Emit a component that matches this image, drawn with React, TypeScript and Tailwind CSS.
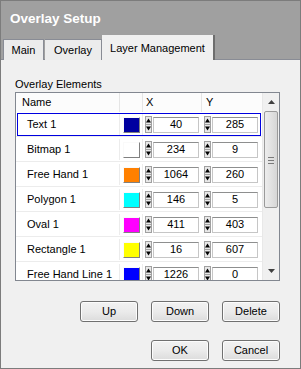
import React from "react";

const rows = [
  { name: "Text 1", color: "#0000a0", x: "40", y: "285", sel: true },
  { name: "Bitmap 1", color: "#ffffff", x: "234", y: "9" },
  { name: "Free Hand 1", color: "#ff8000", x: "1064", y: "260" },
  { name: "Polygon 1", color: "#00ffff", x: "146", y: "5" },
  { name: "Oval 1", color: "#ff00ff", x: "411", y: "403" },
  { name: "Rectangle 1", color: "#ffff00", x: "16", y: "607" },
  { name: "Free Hand Line 1", color: "#0000ff", x: "1226", y: "0" },
];

function Spinner() {
  return (
    <svg width="7" height="17" viewBox="0 0 7 17" className="shrink-0">
      <rect x="0.5" y="0.5" width="6" height="16" fill="#e8e8e8" stroke="#a0a0a0" />
      <line x1="0" y1="8.5" x2="7" y2="8.5" stroke="#a0a0a0" />
      <polygon points="3.5,2.5 6,6.5 1,6.5" fill="#000" />
      <polygon points="1,10.5 6,10.5 3.5,14.5" fill="#000" />
    </svg>
  );
}

function NumBox({ v }: { v: string }) {
  return (
    <div className="flex items-center gap-[1px]">
      <Spinner />
      <div className="w-[46px] h-[16px] bg-white border border-[#c6c6c6] border-t-[#8e8f8f] flex items-center justify-center text-[11px] leading-none text-[#000]">
        {v}
      </div>
    </div>
  );
}

function Btn({ label }: { label: string }) {
  return (
    <div className="w-[58px] h-[21px] rounded-[3px] border border-[#707070] bg-gradient-to-b from-[#f2f2f2] via-[#ebebeb] to-[#dcdcdc] flex items-center justify-center text-[11px] text-black shadow-[inset_0_0_0_1px_#fcfcfc]">
      {label}
    </div>
  );
}

export default function App() {
  return (
    <div
      className="w-[301px] h-[369px] bg-[#a0a0a0] border border-[#7c7c7c] flex flex-col overflow-hidden"
      style={{ fontFamily: '"Liberation Sans", Arial, sans-serif' }}
    >
      <div className="h-[35px] flex items-center pl-[9px] pt-[1px]">
        <span className="text-white font-bold text-[13.5px]">Overlay Setup</span>
      </div>
      <div className="flex items-end pl-[2px] h-[24px] relative z-10 -mb-px">
        <div className="w-[41px] h-[21px] bg-[#ececec] border border-[#898c95] border-b-0 flex items-center justify-center text-[11px] text-black">
          Main
        </div>
        <div className="w-[57px] h-[21px] ml-[1px] bg-[#ececec] border border-[#898c95] border-b-0 border-l-0 flex items-center justify-center text-[11px] text-black">
          Overlay
        </div>
        <div className="w-[113px] h-[25px] bg-[#f0f0f0] border-r-2 border-[#6e6e6e] flex items-start justify-center pt-[5px] text-[11px] text-black">
          Layer Management
        </div>
      </div>
      <div className="flex-1 bg-[#f0f0f0] border-t border-[#898c95] flex flex-col pl-[14px] pr-[20px]">
        <div className="mt-[18px] h-[13px] flex items-center text-[11px] text-black">Overlay Elements</div>
        <div className="mt-[1px] h-[189px] border border-[#828790] bg-white flex">
          <div className="w-[246px] flex flex-col overflow-hidden">
            <div className="h-[19px] shrink-0 flex text-[11px] text-black bg-[#fcfcfc]">
              <div className="w-[104px] pl-[6px] flex items-center border-r border-[#e5e5e5]">Name</div>
              <div className="w-[23px] border-r border-[#e5e5e5]"></div>
              <div className="w-[59px] pl-[3px] flex items-center border-r border-[#e5e5e5]">X</div>
              <div className="w-[60px] pl-[4px] flex items-center">Y</div>
            </div>
            {rows.map((r) => (
              <div key={r.name} className="h-[25px] shrink-0 flex border-b border-[#ececec] text-[11px] text-black">
                <div className={`flex w-[246px] ${r.sel ? "mx-[1px] mt-[1px] border border-[#0000e0] h-[23px]" : "mx-[1px] mt-[1px] border border-transparent h-[23px]"}`}>
                  <div className="w-[102px] pl-[9px] flex items-center border-r border-[#ececec]">{r.name}</div>
                  <div className="w-[23px] flex items-center justify-center border-r border-[#ececec]">
                    <div
                      className="w-[17px] h-[16px] border border-[#fafafa] border-r-[#808080] border-b-[#808080]"
                      style={{ background: r.color }}
                    ></div>
                  </div>
                  <div className="w-[59px] pl-[2px] flex items-center">
                    <NumBox v={r.x} />
                  </div>
                  <div className="w-[58px] pl-[2px] flex items-center">
                    <NumBox v={r.y} />
                  </div>
                </div>
              </div>
            ))}
          </div>
          <div className="w-[17px] bg-[#f0f0f0] border-l border-[#e8e8e8] flex flex-col items-center">
            <div className="h-[18px] flex items-center justify-center">
              <svg width="7" height="4" viewBox="0 0 7 4"><polygon points="3.5,0 7,4 0,4" fill="#404040" /></svg>
            </div>
            <div className="w-[14px] h-[97px] rounded-[2px] border border-[#9a9a9a] bg-gradient-to-r from-[#ededed] to-[#d6d6d6] flex items-center justify-center">
              <svg width="6" height="8" viewBox="0 0 6 8">
                <line x1="0" y1="1.5" x2="6" y2="1.5" stroke="#7a7a7a" />
                <line x1="0" y1="4.5" x2="6" y2="4.5" stroke="#7a7a7a" />
                <line x1="0" y1="7.5" x2="6" y2="7.5" stroke="#7a7a7a" />
              </svg>
            </div>
            <div className="flex-1"></div>
            <div className="h-[18px] flex items-center justify-center">
              <svg width="7" height="4" viewBox="0 0 7 4"><polygon points="0,0 7,0 3.5,4" fill="#404040" /></svg>
            </div>
          </div>
        </div>
        <div className="mt-[20px] flex justify-end gap-[13px]">
          <Btn label="Up" />
          <Btn label="Down" />
          <Btn label="Delete" />
        </div>
        <div className="mt-[18px] flex justify-end gap-[13px]">
          <Btn label="OK" />
          <Btn label="Cancel" />
        </div>
      </div>
    </div>
  );
}
